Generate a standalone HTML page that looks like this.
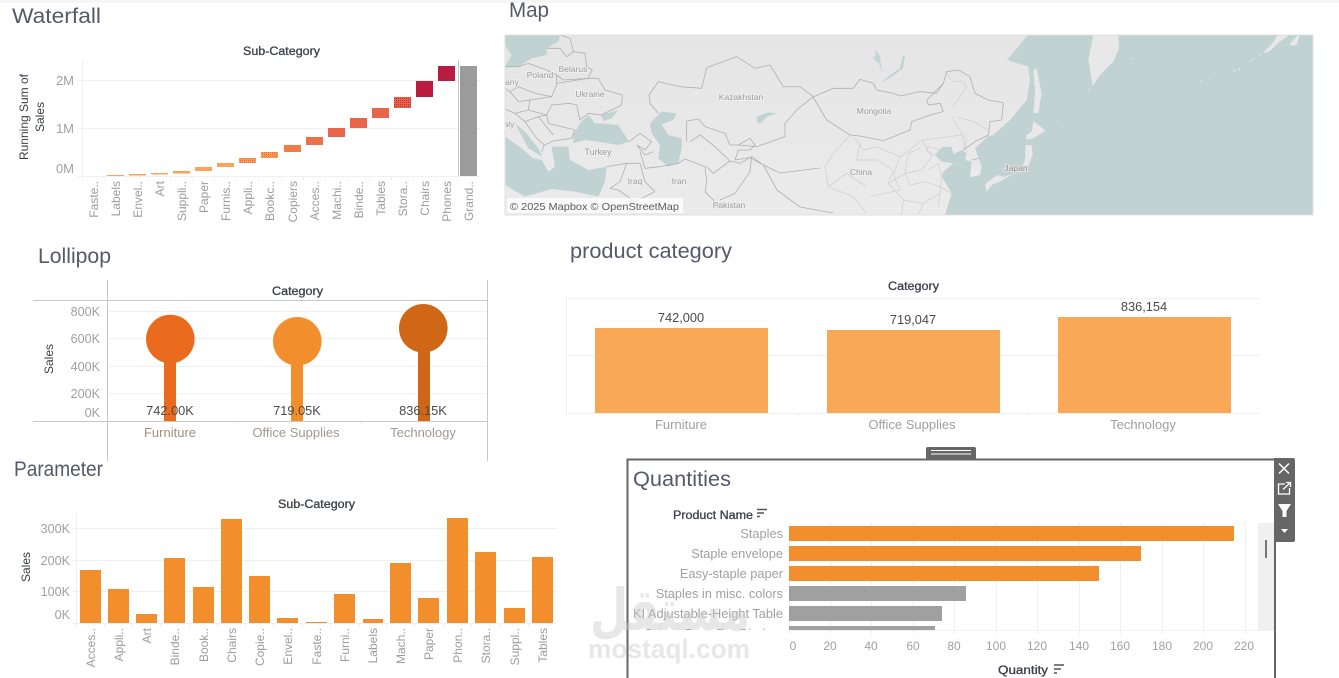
<!DOCTYPE html>
<html><head><meta charset="utf-8"><title>Dashboard</title>
<style>
html,body{margin:0;padding:0;background:#fff;width:1339px;height:678px;overflow:hidden}
svg{display:block;font-family:"Liberation Sans",sans-serif}
.t{font-size:21px;fill:#565969}
.h{font-size:11.500px;fill:#3c3f4a;stroke:#3c3f4a;stroke-width:.3px}
.s{font-size:12px;fill:#3c3f4a}
.r{font-size:12px;fill:#9c9c9c;text-anchor:end}
.y{font-size:12.600px;fill:#a0a0a0;text-anchor:end}
.q{font-size:12.800px;fill:#a0a0a0;text-anchor:end}
.v{font-size:12.800px;fill:#4a4a4a;text-anchor:middle}
.c{font-size:13px;fill:#a0a0a0;text-anchor:middle}
.k{font-size:12px;fill:#a0a0a0;text-anchor:middle}
.g{stroke:#f0f0f0;stroke-width:1;fill:none}
.m{font-size:8.500px;fill:#9a9a9a;text-anchor:middle;paint-order:stroke;stroke:#f0f0f0;stroke-width:2px}
.b{fill:none;stroke:#b0b0b0;stroke-width:2.400;stroke-linejoin:round}
.l{fill:none;stroke:#cdcdcd;stroke-width:2;stroke-linejoin:round}
</style></head><body>
<svg width="1339" height="678" viewBox="0 0 1339 678" xmlns="http://www.w3.org/2000/svg">
<defs>
<clipPath id="mapc"><rect x="505" y="35" width="808" height="180"/></clipPath>
<clipPath id="qc"><rect x="630" y="523" width="644" height="107"/></clipPath>
<linearGradient id="land" x1="0" y1="0" x2="0" y2="1"><stop offset="0" stop-color="#e5e5e5"/><stop offset="1" stop-color="#ebebeb"/></linearGradient>
<pattern id="dots" width="2" height="2" patternUnits="userSpaceOnUse"><rect width="2" height="2" fill="#e8654a"/><rect width="1" height="1" fill="#c32a40"/></pattern>
<pattern id="dots2" width="2" height="2" patternUnits="userSpaceOnUse"><rect width="2" height="2" fill="#f89e55"/><rect width="1" height="1" fill="#e8654a"/></pattern>
</defs>
<rect x="0" y="0" width="1339" height="3" fill="#f5f5f3"/>

<!-- Waterfall -->
<text class="t" x="12" y="23" textLength="89" lengthAdjust="spacingAndGlyphs">Waterfall</text>
<text class="h" x="243" y="55" textLength="77" lengthAdjust="spacingAndGlyphs">Sub-Category</text>
<g class="g"><path d="M77 80.500H480M77 128.500H480M77 176.500H480M82.500 60V180M104.500 176V180M126.500 176V180M148.500 176V180M170.500 176V180M192.500 176V180M214.500 176V180M236.500 176V180M258.500 176V180M281.500 176V180M303.500 176V180M325.500 176V180M347.500 176V180M369.500 176V180M391.500 176V180M413.500 176V180M435.500 176V180M457.500 176V180"/></g>
<path d="M458.500 60V176" stroke="#c8c8c8" stroke-width="1"/>
<g fill="#f8a55a">
<rect x="107" y="175" width="17" height="1"/><rect x="129" y="174" width="17" height="1.500"/><rect x="151" y="173" width="17" height="1.500"/><rect x="173" y="171" width="17" height="2.500"/><rect x="195" y="167" width="17" height="4"/><rect x="217" y="163" width="17" height="4"/></g>
<rect x="239" y="158" width="17" height="5" fill="url(#dots2)"/><rect x="261" y="152" width="17" height="6" fill="url(#dots2)"/>
<rect x="284" y="145" width="17" height="7" fill="#ee7d48"/><rect x="306" y="137" width="17" height="8" fill="#ec7148"/>
<rect x="328" y="128" width="17" height="9" fill="#e8654a"/><rect x="350" y="118" width="17" height="10" fill="#e8654a"/><rect x="372" y="108" width="17" height="10" fill="#e8654a"/>
<rect x="394" y="97" width="17" height="11" fill="url(#dots)"/>
<rect x="416" y="81" width="17" height="16" fill="#b91c3f"/><rect x="438" y="66" width="17" height="15" fill="#b91c3f"/>
<rect x="460" y="66" width="17" height="110" fill="#9b9b9b"/>
<text class="y" x="74" y="85" style="font-size:13px">2M</text><text class="y" x="74" y="133" style="font-size:13px">1M</text><text class="y" x="74" y="173" style="font-size:13px">0M</text>
<text class="s" text-anchor="middle" transform="translate(28,117) rotate(-90)">Running Sum of</text>
<text class="s" text-anchor="middle" transform="translate(44,117) rotate(-90)">Sales</text>
<text class="r" transform="translate(98,181) rotate(-90)">Faste..</text>
<text class="r" transform="translate(120,181) rotate(-90)">Labels</text>
<text class="r" transform="translate(142,181) rotate(-90)">Envel..</text>
<text class="r" transform="translate(164,181) rotate(-90)">Art</text>
<text class="r" transform="translate(186,181) rotate(-90)">Suppli..</text>
<text class="r" transform="translate(208,181) rotate(-90)">Paper</text>
<text class="r" transform="translate(230,181) rotate(-90)">Furnis..</text>
<text class="r" transform="translate(252,181) rotate(-90)">Appli..</text>
<text class="r" transform="translate(274,181) rotate(-90)">Bookc..</text>
<text class="r" transform="translate(297,181) rotate(-90)">Copiers</text>
<text class="r" transform="translate(319,181) rotate(-90)">Acces..</text>
<text class="r" transform="translate(341,181) rotate(-90)">Machi..</text>
<text class="r" transform="translate(363,181) rotate(-90)">Binde..</text>
<text class="r" transform="translate(385,181) rotate(-90)">Tables</text>
<text class="r" transform="translate(407,181) rotate(-90)">Stora..</text>
<text class="r" transform="translate(429,181) rotate(-90)">Chairs</text>
<text class="r" transform="translate(451,181) rotate(-90)">Phones</text>
<text class="r" transform="translate(473,181) rotate(-90)">Grand..</text>

<!-- Map -->
<text class="t" x="509" y="17" textLength="40" lengthAdjust="spacingAndGlyphs">Map</text>
<g clip-path="url(#mapc)">
<rect x="505" y="35" width="808" height="180" fill="url(#land)"/>
<g transform="translate(505,35) scale(.33333)">
<g fill="#c0d2d2">
<path d="M0 0H165L160 20 125 40 125 60 80 70 40 95H0L20 60 0 30Z"/>
<path d="M205 300L225 265 250 240 270 265 290 265 340 270 372 320 340 330 280 320 240 315 205 325Z"/>
<path d="M288 240L340 225 320 250 295 258Z"/>
<path d="M435 265L470 230 515 235 505 255 470 268 490 300 530 310 530 340 520 385 490 395 460 370 465 330 440 295Z"/>
<path d="M30 265L60 290 100 340 112 365 70 340Z"/>
<path d="M0 305L50 340 85 370 110 375 130 410 150 395 140 335 190 335 195 375 250 405 305 395 300 440 280 485 210 470 140 462 60 485 0 450Z"/>
<path d="M755 245L790 232 815 235 785 245 770 262 758 265Z"/>
</g>
<g class="b">
<path d="M0 95L40 95 70 85 125 105 155 120 155 150 140 185 90 175 40 155 15 170 0 160"/>
<path d="M125 40L165 40 185 65 205 50 240 55 245 95 262 105 248 130 175 135 155 120"/>
<path d="M165 0L195 10 205 50"/>
<path d="M155 145L248 130 280 130 300 165 352 180 350 210 320 225 288 240 250 235 225 255 215 210 195 205 140 210 125 240 130 265"/>
<path d="M15 170L40 200 75 195 140 185M75 195L70 225 30 235 0 222M70 225L125 240M30 235L60 260 100 245 125 240M60 260L95 310 118 330 145 318 200 310 210 285M130 265L210 285M100 245L145 300M118 330L110 350"/>
<path d="M372 320L405 295 440 320 420 345 395 330M395 330L420 360 445 350"/>
<path d="M305 395L365 385 405 385 420 440 450 470M365 385L345 440 315 460 340 465 390 500 450 470"/>
<path d="M405 350L420 400 465 395 520 385 540 372 600 395 605 440 600 470 625 495 640 520"/>
<path d="M605 395L625 415 675 378 705 385 740 365 735 410 690 475 645 495"/>
<path d="M432 180L460 140 525 155 590 160 605 98 695 65 750 100 795 90 835 155 885 155 925 185 875 225 840 265 840 305 755 335 700 330"/>
<path d="M432 180L435 205 460 235M545 258V320M545 258L580 252 600 275 660 295 675 330 700 330M555 320L585 300 630 335 675 378"/>
<path d="M700 330L735 310 750 330 735 345 700 345 690 375M690 375L735 368 775 390 825 414 945 399M740 365L775 390 816 465 885 516 984 534"/>
</g>
</g>
<g transform="translate(500,0) scale(.33333)" class="l">
<path d="M1050 405L1000 460 975 500 985 560 1060 590 1100 640M1060 410L1090 450 1130 440 1200 470 1230 450M1200 470L1180 525 1200 570 1110 590M985 560L1040 520 1100 560"/>
</g>
<g transform="translate(860,60) scale(.33333)">
<path d="M504 -75L441 0 505 20 510 60 500 120 450 180 400 225 385 228 345 265 365 320 360 345 330 352 335 305 315 300 320 280 305 270 280 282 275 260 245 262 225 285 245 305 280 310 250 335 245 350 275 400 255 465H1360V-75Z" fill="#c0d2d2"/>
<g fill="#e8e8e8">
<path d="M520 30L530 25 545 100 535 160 520 158 525 100Z"/>
<path d="M520 183L557 212 520 235 497 238 500 225 515 215Z"/>
<path d="M497 255L515 255 518 285 500 330 470 340 430 350 410 345 385 365 375 375 380 395 395 375 420 365 445 350 480 335 495 300Z"/>
</g>
<g class="b">
<path d="M-141 111L-81 85-21 85 0 58 40 70 50 90 100 100 120 108 180 95 230 100 250 70 260 35 295 30 330 50 345 100 385 120 430 128 425 180 390 185 385 225 345 245 310 270"/>
<path d="M-141 111L-100 180-30 225 0 228 70 242 150 210 155 185 210 165 250 155 240 130 205 135 200 120 250 70"/>
<path d="M335 300L355 295"/>
</g>
<g class="l">
<path d="M150 270L185 240 230 235 305 225 320 275M185 240L215 290 185 330 135 340 85 370M135 340L145 280 180 265M240 270L205 260 200 275 240 290"/>
<path d="M0 250L-10 300 50 300 100 330 85 370M205 330L235 310 245 350 240 400 190 430 130 420 85 370M135 340L150 375 195 365 240 380 275 400M130 420L125 465M190 430L175 465M240 400L235 440"/>
<path d="M275 165L290 195 300 210 320 240 310 270M290 170L340 185 385 210M280 140L320 80 310 65 280 65 260 40"/>
</g>
</g>
<g transform="translate(920,0) scale(.33333)" fill="#e8e8e8">
<path d="M520 105H595L597 145 580 185 540 225 518 258 505 180Z"/>
<path d="M505 270L515 262 505 275ZM632 175h4v4h-4ZM410 362h4v3h-4ZM840 242h6v2h-6ZM866 234h4v3h-4ZM938 212l6-5v8ZM952 208l10-6-4 9ZM985 185l15-6 20-16 30-10 25-25 35-25h-35l-20 30-30 30-30 15Z"/>
<path d="M1110 130l25-25 3 2-8 28-18 2Z"/>
</g>
<path d="M903 56L900 68 880 83 890 78 903 68 905 56Z" fill="#c0d2d2"/>
<path d="M874 48l6 8 2 17-3-9-6-6 3-4Z" fill="#c5d6d6"/>
<rect x="507" y="198" width="176" height="15" fill="#fff" fill-opacity=".75"/>
<text x="510" y="210" font-size="10.500" fill="#5a5a5a" textLength="169" lengthAdjust="spacingAndGlyphs">© 2025 Mapbox © OpenStreetMap</text>
<text class="m" x="540" y="78">Poland</text><text class="m" x="573" y="72">Belarus</text><text class="m" x="590" y="97">Ukraine</text>
<text class="m" x="741" y="100">Kazakhstan</text><text class="m" x="874" y="114">Mongolia</text><text class="m" x="598" y="155" style="font-size:9px">Turkey</text>
<text class="m" x="635" y="184">Iraq</text><text class="m" x="679" y="184">Iran</text><text class="m" x="729" y="208">Pakistan</text>
<text class="m" x="861" y="175">China</text><text class="m" x="1016" y="171" style="fill:#8f8f8f;stroke:#e4e4e4">Japan</text><text class="m" x="512" y="85">any</text><text class="m" x="509" y="127">aly</text>
</g>
<rect x="505" y="35" width="808" height="180" fill="none" stroke="#e0e0e0" stroke-width="1"/>

<!-- Lollipop -->
<text class="t" x="38" y="263" textLength="73" lengthAdjust="spacingAndGlyphs">Lollipop</text>
<text class="h" x="272" y="295" textLength="51" lengthAdjust="spacingAndGlyphs">Category</text>
<g class="g"><path d="M108 311.500H487M108 338.500H487M108 366.500H487M108 393.500H487M233.500 421V424M360.500 421V424"/></g>
<rect x="164" y="339" width="12" height="82" fill="#ea6b1e"/><circle cx="170.300" cy="339" r="24.300" fill="#ea6b1e"/>
<rect x="291" y="341" width="12" height="80" fill="#f28e2b"/><circle cx="297.300" cy="341.300" r="24.300" fill="#f28e2b"/>
<rect x="418" y="328" width="12" height="93" fill="#cf6716"/><circle cx="423.300" cy="328.300" r="24.300" fill="#cf6716"/>
<g stroke="#c8c8c8" fill="none"><path d="M33 300.500H487.500M33 421.500H487.500M107.500 280V461M487.500 280V461"/></g>
<text class="y" x="100" y="316">800K</text><text class="y" x="100" y="343">600K</text><text class="y" x="100" y="371">400K</text><text class="y" x="100" y="398">200K</text><text class="y" x="100" y="417">0K</text>
<text class="s" text-anchor="middle" transform="translate(53,359) rotate(-90)">Sales</text>
<text class="v" x="170" y="415">742.00K</text><text class="v" x="297" y="415">719.05K</text><text class="v" x="423" y="415">836.15K</text>
<text class="c" x="170" y="437" style="fill:#a08f80">Furniture</text><text class="c" x="296" y="437" style="fill:#a09a94">Office Supplies</text><text class="c" x="423" y="437" style="fill:#a09a94">Technology</text>

<!-- product category -->
<text class="t" x="570" y="258" textLength="162" lengthAdjust="spacingAndGlyphs">product category</text>
<text class="h" x="888" y="290" textLength="51" lengthAdjust="spacingAndGlyphs">Category</text>
<g class="g"><path d="M566 298.500H1260M566 355.500H1260M566 413.500H1260M566.500 296V417M797.500 413V417M1028.500 413V417"/></g>
<g fill="#f9a857"><rect x="595" y="328" width="173" height="85"/><rect x="827" y="330" width="173" height="83"/><rect x="1058" y="317" width="173" height="96"/></g>
<text class="v" x="681" y="322">742,000</text><text class="v" x="913" y="324">719,047</text><text class="v" x="1144" y="311">836,154</text>
<text class="c" x="681" y="429">Furniture</text><text class="c" x="912" y="429">Office Supplies</text><text class="c" x="1143" y="429">Technology</text>

<!-- Parameter -->
<text class="t" x="14" y="476" textLength="89" lengthAdjust="spacingAndGlyphs">Parameter</text>
<text class="h" x="278" y="508" textLength="77" lengthAdjust="spacingAndGlyphs">Sub-Category</text>
<g class="g"><path d="M72 528.500H557M72 560.500H557M72 591.500H557M72 623.500H557M76.500 513V627M104.500 623V627M132.500 623V627M160.500 623V627M189.500 623V627M217.500 623V627M245.500 623V627M273.500 623V627M302.500 623V627M330.500 623V627M359.500 623V627M386.500 623V627M414.500 623V627M443.500 623V627M471.500 623V627M500.500 623V627M528.500 623V627"/></g>
<g fill="#f28e2b">
<rect x="80" y="570" width="21" height="53"/><rect x="108" y="589" width="21" height="34"/><rect x="136" y="614" width="21" height="9"/><rect x="164" y="558" width="21" height="65"/><rect x="193" y="587" width="21" height="36"/><rect x="221" y="519" width="21" height="104"/><rect x="249" y="576" width="21" height="47"/><rect x="277" y="618" width="21" height="5"/><rect x="306" y="622" width="21" height="1"/><rect x="334" y="594" width="21" height="29"/><rect x="363" y="619" width="20" height="4"/><rect x="390" y="563" width="21" height="60"/><rect x="418" y="598" width="21" height="25"/><rect x="447" y="518" width="21" height="105"/><rect x="475" y="552" width="21" height="71"/><rect x="504" y="608" width="21" height="15"/><rect x="532" y="557" width="21" height="66"/>
</g>
<text class="y" x="70" y="533">300K</text><text class="y" x="70" y="565">200K</text><text class="y" x="70" y="596">100K</text><text class="y" x="70" y="619">0K</text>
<text class="s" text-anchor="middle" transform="translate(30,567) rotate(-90)">Sales</text>
<text class="r" transform="translate(95,628) rotate(-90)">Acces..</text>
<text class="r" transform="translate(123,628) rotate(-90)">Appli..</text>
<text class="r" transform="translate(151,628) rotate(-90)">Art</text>
<text class="r" transform="translate(179,628) rotate(-90)">Binde..</text>
<text class="r" transform="translate(208,628) rotate(-90)">Book..</text>
<text class="r" transform="translate(236,628) rotate(-90)">Chairs</text>
<text class="r" transform="translate(264,628) rotate(-90)">Copie..</text>
<text class="r" transform="translate(292,628) rotate(-90)">Envel..</text>
<text class="r" transform="translate(321,628) rotate(-90)">Faste..</text>
<text class="r" transform="translate(349,628) rotate(-90)">Furni..</text>
<text class="r" transform="translate(377,628) rotate(-90)">Labels</text>
<text class="r" transform="translate(405,628) rotate(-90)">Mach..</text>
<text class="r" transform="translate(433,628) rotate(-90)">Paper</text>
<text class="r" transform="translate(462,628) rotate(-90)">Phon..</text>
<text class="r" transform="translate(490,628) rotate(-90)">Stora..</text>
<text class="r" transform="translate(519,628) rotate(-90)">Suppl..</text>
<text class="r" transform="translate(547,628) rotate(-90)">Tables</text>

<!-- Quantities -->
<rect x="1258" y="523" width="16" height="107" fill="#f0f0f0"/>
<rect x="1265" y="540" width="2" height="18" fill="#777"/>
<g class="g"><path d="M789 630.500H1274M789.500 523V634M830.500 523V634M871.500 523V634M913.500 523V634M954.500 523V634M996.500 523V634M1037.500 523V634M1079.500 523V634M1120.500 523V634M1162.500 523V634M1203.500 523V634M1245.500 523V634"/></g>
<text class="t" x="633" y="486" textLength="98" lengthAdjust="spacingAndGlyphs">Quantities</text>
<text x="673" y="519" class="h" textLength="80" lengthAdjust="spacingAndGlyphs">Product Name</text>
<path d="M757 509.500H767M757 513H764M757 516.500H760" stroke="#555" stroke-width="1.500" fill="none"/>
<g clip-path="url(#qc)">
<rect x="789" y="526" width="445" height="15" fill="#f28e2b"/><rect x="789" y="546" width="352" height="15" fill="#f28e2b"/><rect x="789" y="566" width="310" height="15" fill="#f28e2b"/>
<rect x="789" y="586" width="177" height="15" fill="#a0a0a0"/><rect x="789" y="606" width="153" height="15" fill="#a0a0a0"/><rect x="789" y="626" width="146" height="15" fill="#a0a0a0"/>
<text class="q" x="783" y="538">Staples</text><text class="q" x="783" y="558">Staple envelope</text><text class="q" x="783" y="578">Easy-staple paper</text><text class="q" x="783" y="598">Staples in misc. colors</text><text class="q" x="783" y="618" textLength="150" lengthAdjust="spacingAndGlyphs">KI Adjustable-Height Table</text><text class="q" x="783" y="638">Storex Dura Pro Binders</text>
</g>
<g class="k"><text x="793" y="650">0</text><text x="830" y="650">20</text><text x="871" y="650">40</text><text x="913" y="650">60</text><text x="954" y="650">80</text><text x="996" y="650">100</text><text x="1037" y="650">120</text><text x="1079" y="650">140</text><text x="1120" y="650">160</text><text x="1162" y="650">180</text><text x="1203" y="650">200</text><text x="1244" y="650">220</text></g>
<text x="998" y="674" class="h" textLength="50" lengthAdjust="spacingAndGlyphs">Quantity</text>
<path d="M1054 665H1064M1054 669H1061M1054 673H1057" stroke="#555" stroke-width="1.500" fill="none"/>

<!-- frame -->
<path d="M627.500 678V459.500H1275V678" fill="none" stroke="#666" stroke-width="2"/>
<path d="M926 459V449a2 2 0 0 1 2-2H974a2 2 0 0 1 2 2V459Z" fill="#666"/>
<path d="M931 450.500H971M931 454H971" stroke="#fff" stroke-width="1"/>
<path d="M1274 458H1293a2 2 0 0 1 2 2V540a2 2 0 0 1-2 2H1274Z" fill="#666"/>
<path d="M1279 463.500L1289 473.500M1289 463.500L1279 473.500" stroke="#fff" stroke-width="1.500" fill="none"/>
<path d="M1285 484H1278.500V494H1289.500V488M1283 489.500L1290 483M1286 482.500H1290.500V487" stroke="#fff" stroke-width="1.300" fill="none"/>
<path d="M1278 504H1291L1286.500 511V517H1282.500V511Z" fill="#fff"/>
<path d="M1281 529H1288L1284.500 533Z" fill="#fff"/>

<!-- watermark -->
<g fill="#c9c9c9" fill-opacity=".45">
<text x="590" y="630" font-family="'DejaVu Sans',sans-serif" font-size="58" font-weight="700" textLength="160" lengthAdjust="spacingAndGlyphs">مستقل</text>
<text x="588" y="658" font-size="27" font-weight="700" textLength="162" lengthAdjust="spacingAndGlyphs">mostaql.com</text>
</g>
</svg>
</body></html>
